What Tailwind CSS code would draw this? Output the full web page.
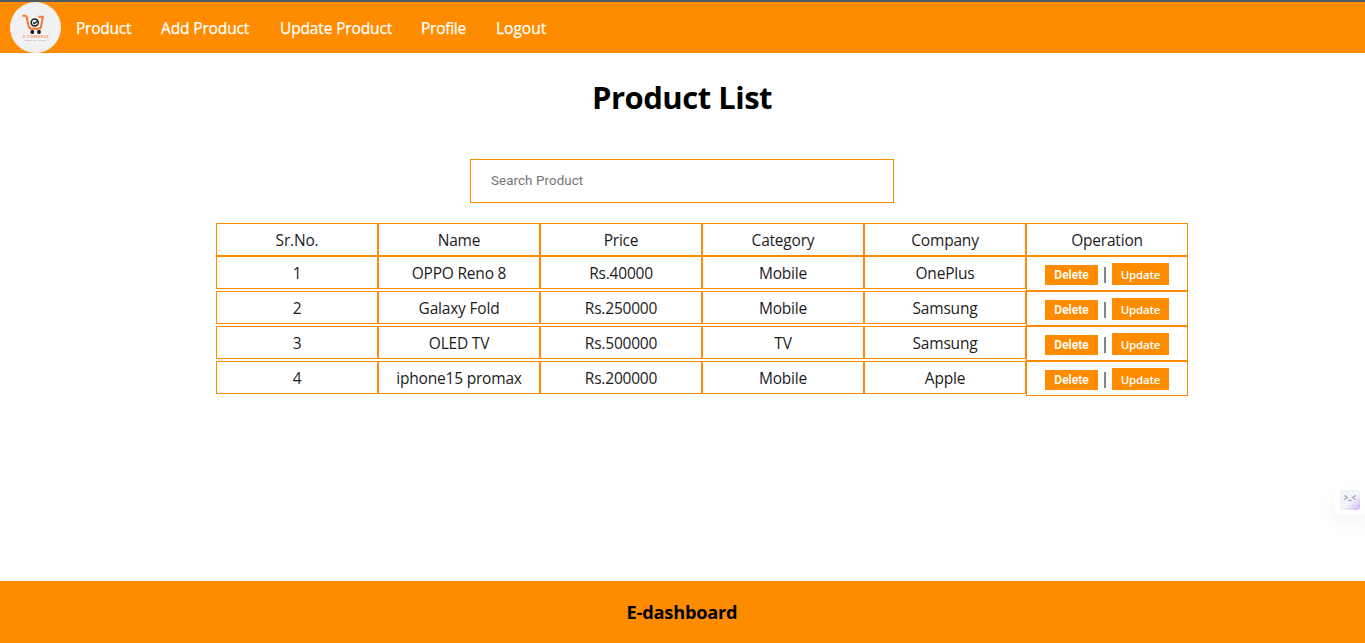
<!DOCTYPE html>
<html lang="en">
<head>
<meta charset="utf-8">
<title>E-dashboard</title>
<script src="https://cdn.jsdelivr.net/npm/@tailwindcss/browser@4"></script>
</head>
<body class="relative flex h-[643px] flex-col overflow-hidden bg-white font-['Open_Sans','Noto_Sans',sans-serif] text-black">
<header class="flex h-[53px] shrink-0 items-start border-t-2 border-[#4f5b62] bg-[#ff8c00] pl-[10px]">
  <svg class="h-[51px] w-[51px] shrink-0" viewBox="0 0 51 51">
    <circle cx="25.500" cy="25.500" r="25.500" fill="#f1f0f3"/>
    <path d="M12.300 13.700h2.500q1.600 0 2 2l1.500 7q1 4.100 3 4.100h7.700q1.600 0 2-2L32.800 14.800h-4.300" fill="none" stroke="#f47a30" stroke-width="2.100"/>
    <circle cx="24.700" cy="20.500" r="3.500" fill="none" stroke="#222" stroke-width="1.500"/>
    <path d="M23 20.500l1.500 1.100 3.500-3.400" fill="none" stroke="#222" stroke-width="1.200"/>
    <circle cx="22.300" cy="30" r="1.900" fill="#111"/><circle cx="29" cy="30" r="1.900" fill="#111"/>
    <text x="13" y="36" font-size="3" font-weight="700" font-family="Liberation Sans" textLength="25.500" fill="#f6905a">E-COMMERCE</text>
    <text x="15" y="38.500" font-size="1.800" font-family="Liberation Sans" textLength="21" fill="#777">COMPANY LOGO</text>
  </svg>
  <nav class="ml-[15px] flex gap-[30px] whitespace-nowrap pt-[14px] text-[15.500px] leading-6 tracking-[-0.14px] text-white [-webkit-text-stroke:0.25px_white]">
    <a class="w-[55px] tracking-[-0.25px]">Product</a><a class="w-[89px]">Add Product</a><a class="w-[111px]">Update Product</a><a class="w-[45px] tracking-[-0.25px]">Profile</a><a class="tracking-normal">Logout</a>
  </nav>
</header>
<main class="flex grow flex-col items-center">
  <h1 class="mt-[23px] pr-px text-[31px] leading-[43px] font-bold tracking-[-0.5px]">Product List</h1>
  <input class="mt-10 mr-px h-[44px] w-[424px] border border-[#ff8c00] px-5 pb-[2px] font-[Roboto,sans-serif] text-[13.333px] tracking-[0.1px] placeholder-[#757575]" placeholder="Search Product">
  <section id="rows" class="mt-5 ml-[39px] flex w-[972px] flex-col text-center text-[15.500px] leading-[21px] tracking-[-0.2px] text-[#1c1c1c]">
    <div class="flex h-[33px] *:h-[33px] *:w-[162px] *:border *:border-[#ff8c00] *:pt-[6px]"><div>Sr.No.</div><div>Name</div><div>Price</div><div>Category</div><div>Company</div><div>Operation</div></div>
  </section>
</main>
<footer class="flex h-[62px] shrink-0 items-center justify-center bg-[#ff8c00] pt-px pr-px text-[18.200px] font-bold tracking-[-0.2px]">E-dashboard</footer>
<div class="absolute top-[485px] right-0 flex h-[30px] w-[30px] items-center justify-center rounded-l-md bg-white shadow-[0_8px_20px_rgba(0,0,0,0.05)]">
  <svg class="h-5 w-5" viewBox="0 0 20 20"><defs><linearGradient id="g" x1="0" y1="0" x2="1" y2="1"><stop offset="0.550" stop-color="#f0f3fa"/><stop offset="1" stop-color="#d3b2f5"/></linearGradient></defs><rect width="20" height="20" rx="3" fill="url(#g)"/><path d="M4.500 5.500l3 2-3 2M15.500 5.500l-3 2 3 2M8.500 10q1.500 1 3 0" fill="none" stroke="#969ca5" stroke-width="1.100"/></svg>
</div>
<template id="row">
  <div class="flex h-[35px]">
    <div class="flex *:h-[33px] *:w-[162px] *:border *:border-[#ff8c00] *:pt-[6px]"><div></div><div></div><div></div><div></div><div></div></div>
    <div class="flex h-[35px] w-[162px] items-start border border-[#ff8c00] pl-[18px] text-xs leading-5 font-semibold text-white">
      <button class="mt-2 h-5 w-[53px] bg-[#ff8c00] font-[Roboto,sans-serif] tracking-normal">Delete</button>
      <span class="mt-[10px] ml-[6px] h-4 w-[2px] bg-[#858585]"></span>
      <button class="mt-[6px] ml-[6px] h-[22px] w-[57px] bg-[#ff8c00] pt-px text-[11.500px] tracking-[-0.2px]">Update</button>
    </div>
  </div>
</template>
<script>
[["1","OPPO Reno 8","Rs.40000","Mobile","OnePlus"],["2","Galaxy Fold","Rs.250000","Mobile","Samsung"],["3","OLED TV","Rs.500000","TV","Samsung"],["4","iphone15 promax","Rs.200000","Mobile","Apple"]].forEach(r=>{
  const n=document.getElementById('row').content.cloneNode(true);
  const cells=n.firstElementChild.firstElementChild.children;
  r.forEach((t,i)=>cells[i].textContent=t);
  document.getElementById('rows').append(n);
});
</script>
</body>
</html>
